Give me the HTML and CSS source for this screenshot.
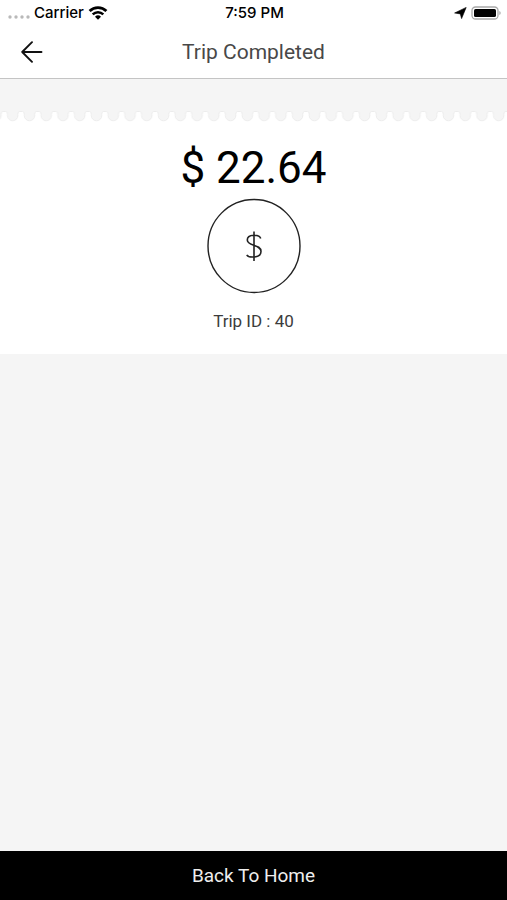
FILE: index.html
```
<!DOCTYPE html>
<html lang="en">

<head>
    <meta charset="UTF-8">
    <meta name="viewport" content="width=device-width, initial-scale=1.0">
    <title>Trip Completed</title>
    <link rel="stylesheet" href="styles.css">
</head>

<body>
    <div class="status">
        <div class="status-left">
            <svg class="dots" width="22" height="4" viewBox="0 0 22 4" fill="#b9b9b9">
                <circle cx="2" cy="2" r="1.7" />
                <circle cx="8" cy="2" r="1.7" />
                <circle cx="14" cy="2" r="1.7" />
                <circle cx="20" cy="2" r="1.7" />
            </svg>
            <span>Carrier</span>
            <svg width="20" height="14" viewBox="0 0 20 14">
                <path d="M1.6 5.1a12 12 0 0 1 16.8 0" fill="none" stroke="#000" stroke-width="2.8" />
                <path d="M4.7 8.4a7.6 7.6 0 0 1 10.6 0" fill="none" stroke="#000" stroke-width="2.5" />
                <path d="M10 13.7l-3-3a4.3 4.3 0 0 1 6 0z" />
            </svg>
        </div>
        <span class="time">7:59 PM</span>
        <div class="status-right">
            <svg width="13" height="12" viewBox="0 0 13 12">
                <path d="M12.2.4L7.6 11.6 6.3 6.9.6 6z" stroke="#000" stroke-width="0.6" stroke-linejoin="round" />
            </svg>
            <svg width="30" height="14" viewBox="0 0 30 14">
                <rect x="1" y="1" width="26" height="12" rx="3.5" fill="#fff" stroke="#a8a8a8" stroke-width="1.3" />
                <rect x="3" y="3" width="22" height="8" rx="1.6" />
                <path d="M28.3 5v4q1.4-.6 1.4-2t-1.4-2z" fill="#a8a8a8" />
            </svg>
        </div>
    </div>

    <header class="header">
        <button class="back" type="button" aria-label="Back">
            <svg width="22" height="22" viewBox="0 0 22 22" fill="none" stroke="#111" stroke-width="1.9" stroke-linecap="round" stroke-linejoin="round">
                <path d="M11 1.2L1.2 11 11 20.8M1.2 11H20.5" />
            </svg>
        </button>
        <h1>Trip Completed</h1>
    </header>

    <main>
        <section class="receipt">
            <!-- torn paper edge -->
            <svg class="edge" width="100%" height="12">
                <defs>
                    <pattern id="tooth" x="4.3" width="16.76" height="12" patternUnits="userSpaceOnUse">
                        <path d="M-1 1.5H1.5Q3.2 1.5 3.2 4.5V5.6A5.2 5.2 0 0 0 13.6 5.6V4.5Q13.6 1.5 15.3 1.5H18V-2H-1z" fill="#f5f5f5" stroke="#e9e9e9" stroke-width="0.8" />
                    </pattern>
                </defs>
                <rect width="100%" height="12" fill="url(#tooth)" />
            </svg>
            <p class="amount">$ 22.64</p>
            <svg class="coin" width="94" height="96" viewBox="0 0 94 96" fill="none" stroke="#222">
                <ellipse cx="47" cy="48" rx="46" ry="46.5" stroke-width="1.4" />
                <path d="M53.7 40.5C52.5 36 40.3 35.8 40.3 42C40.3 48.6 54 45.8 54 53.5C54 60.4 41.5 60 39.8 56.8M47 33.5V63" stroke-width="1.6" />
            </svg>
            <p class="trip">Trip ID : 40</p>
        </section>
    </main>

    <button class="home" type="button">Back To Home</button>
</body>

</html>
```

FILE: styles.css
```
* {
    box-sizing: border-box;
}

body {
    margin: 0;
    min-height: 100vh;
    display: flex;
    flex-direction: column;
    background-color: #f5f5f5;
    color: #000;
    font-family: Roboto, "Liberation Sans", sans-serif;
}

svg {
    display: block;
}

.status {
    display: grid;
    grid-template-columns: 1fr auto 1fr;
    align-items: center;
    height: 26px;
    padding: 0 6px 0 8px;
    background-color: #fff;
    font-family: Inter, sans-serif;
    font-size: 15px;
    font-weight: 500;
    line-height: 18px;
}

.status-left,
.status-right {
    display: flex;
    align-items: center;
    gap: 4px;
}

.status-right {
    justify-content: flex-end;
}

.dots {
    margin-top: 8px;
}

.header {
    display: grid;
    grid-template-columns: 64px 1fr 64px;
    align-items: center;
    height: 53px;
    background-color: #fff;
    border-bottom: 1px solid #c4c4c4;
}

.back {
    height: 52px;
    padding: 0 0 0 21px;
    border: none;
    background: none;
    cursor: pointer;
}

.header h1 {
    margin: 0;
    color: #484848;
    font-size: 21px;
    font-weight: 400;
    text-align: center;
}

main {
    flex: 1;
    padding-top: 31px;
}

.receipt {
    display: flex;
    flex-direction: column;
    align-items: center;
    padding-bottom: 20px;
    background-color: #fff;
}

.receipt p {
    margin: 0;
}

.amount {
    padding-top: 18px;
    font-size: 44px;
    line-height: 56px;
}

.coin {
    margin-top: 2px;
}

.trip {
    padding-top: 14px;
    color: #3c3c3c;
    font-size: 17px;
    line-height: 26px;
}

.home {
    height: 49px;
    border: none;
    background-color: #000;
    color: #eee;
    font-family: inherit;
    font-size: 19px;
    cursor: pointer;
}
```
